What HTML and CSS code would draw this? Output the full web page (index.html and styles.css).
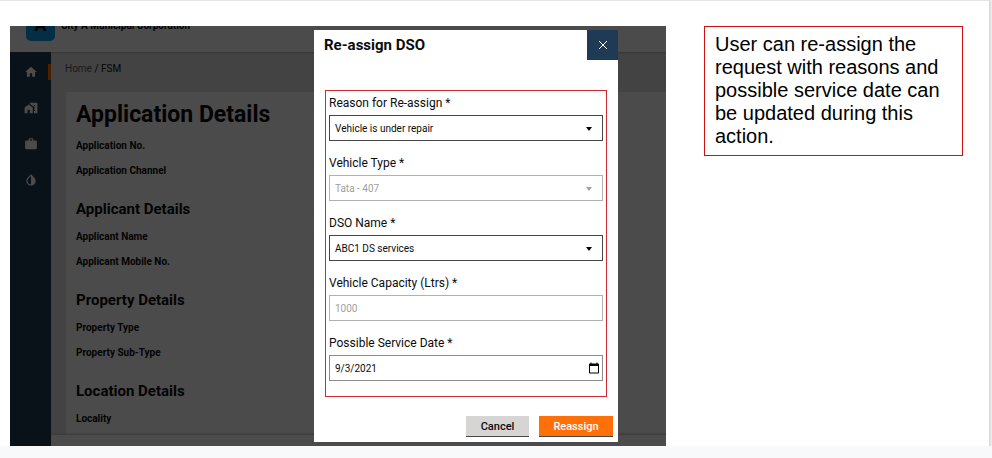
FILE: index.html
```html
<!DOCTYPE html>
<html lang="en">
<head>
<meta charset="utf-8">
<title>Re-assign DSO</title>
<link rel="stylesheet" href="styles.css">
</head>
<body>
<div class="slide">
  <div class="shot">
    <div class="app">
      <header class="topbar">
        <span class="logo">A</span>
        <span class="city">City A Municipal Corporation</span>
      </header>
      <div class="body">
        <nav class="sidebar" aria-label="Main">
          <a class="nav-item active" href="#" aria-label="Home">
            <svg viewBox="0 0 24 24"><path d="M10 20v-6h4v6h5v-8h3L12 3 2 12h3v8z"/></svg>
          </a>
          <a class="nav-item" href="#" aria-label="Property">
            <svg viewBox="0 0 24 24"><path d="M1 11v10h5v-6h4v6h5V11L8 6z"/><path d="M10 3v1.970l7 5V11h2v2h-2v2h2v2h-2v4h6V3H10zm9 6h-2V7h2v2z"/></svg>
          </a>
          <a class="nav-item" href="#" aria-label="Work">
            <svg viewBox="0 0 24 24"><path fill-rule="evenodd" d="M20 6h-4V4c0-1.110-.89-2-2-2h-4c-1.110 0-2 .89-2 2v2H4c-1.110 0-2 .89-2 2v11c0 1.110.89 2 2 2h16c1.110 0 2-.89 2-2V8c0-1.110-.89-2-2-2zM14 6h-4V4h4v2z"/></svg>
          </a>
          <a class="nav-item" href="#" aria-label="Water">
            <svg viewBox="0 0 24 24"><path fill-rule="evenodd" d="M17.660 7.930 12 2.270 6.340 7.930c-3.120 3.120-3.120 8.190 0 11.310C7.900 20.800 9.950 21.580 12 21.580s4.100-.78 5.660-2.340c3.120-3.120 3.120-8.190 0-11.310zM12 19.590c-1.600 0-3.110-.62-4.240-1.760C6.620 16.690 6 15.190 6 13.590s.62-3.110 1.760-4.240L12 5.100v14.490z"/></svg>
          </a>
        </nav>
        <main class="content">
          <p class="crumbs"><a href="#">Home</a> / FSM</p>
          <section class="card">
            <h1>Application Details</h1>
            <p>Application No.</p>
            <p>Application Channel</p>
            <h2>Applicant Details</h2>
            <p>Applicant Name</p>
            <p>Applicant Mobile No.</p>
            <h2>Property Details</h2>
            <p>Property Type</p>
            <p>Property Sub-Type</p>
            <h2>Location Details</h2>
            <p>Locality</p>
          </section>
          <div class="actionbar"></div>
        </main>
      </div>
    </div>
    <div class="overlay">
      <form class="modal" role="dialog" aria-labelledby="title">
        <div class="modal-head">
          <h2 id="title">Re-assign DSO</h2>
          <button type="button" class="close" aria-label="Close">
            <svg viewBox="0 0 10 10"><path d="M1 1l8 8M9 1l-8 8"/></svg>
          </button>
        </div>
        <div class="fields">
          <label for="reason">Reason for Re-assign *</label>
          <div class="control">
            <select id="reason"><option>Vehicle is under repair</option></select>
            <svg class="arrow" viewBox="0 0 6 4"><path d="M0 0h6L3 4z"/></svg>
          </div>
          <label for="type">Vehicle Type *</label>
          <div class="control">
            <select id="type" disabled><option>Tata - 407</option></select>
            <svg class="arrow muted" viewBox="0 0 6 4"><path d="M0 0h6L3 4z"/></svg>
          </div>
          <label for="dso">DSO Name *</label>
          <div class="control">
            <select id="dso"><option>ABC1 DS services</option></select>
            <svg class="arrow" viewBox="0 0 6 4"><path d="M0 0h6L3 4z"/></svg>
          </div>
          <label for="capacity">Vehicle Capacity (Ltrs) *</label>
          <div class="control"><input id="capacity" type="text" value="1000" disabled></div>
          <label for="date">Possible Service Date *</label>
          <div class="control">
            <input id="date" class="date" type="text" value="9/3/2021">
            <svg class="calendar" viewBox="0 0 24 24"><path fill-rule="evenodd" d="M20 3h-1V1h-2v2H7V1H5v2H4c-1.100 0-2 .9-2 2v16c0 1.100.9 2 2 2h16c1.100 0 2-.9 2-2V5c0-1.100-.9-2-2-2zm0 18H4V8h16v13z"/></svg>
          </div>
        </div>
        <div class="buttons">
          <button type="button" class="btn cancel">Cancel</button>
          <button type="submit" class="btn primary">Reassign</button>
        </div>
      </form>
    </div>
  </div>
  <p class="note">User can re-assign the request with reasons and possible service date can be updated during this action.</p>
</div>
</body>
</html>
```
FILE: styles.css
```css
* { box-sizing: border-box; }
body {
  margin: 0;
  background: #f8f9fb;
  font-family: Roboto, "Liberation Sans", sans-serif;
  color: #0b0c0c;
}
h1, h2, p { margin: 0; }
.slide {
  display: grid;
  grid-template-columns: 656fr 259fr;
  column-gap: 38px;
  align-items: start;
  margin-right: 2px;
  padding: 25px 26px 0 10px;
  background: #fff;
  border-top: 1px solid #e4e4e4;
  border-right: 1px solid #d8d8d8;
  box-shadow: 0 1px 3px 1px #d4d4d4;
}
.shot { position: relative; overflow: hidden; }

/* The page behind the dialog is scrolled a little, so its top bar is cut. */
.app { margin-top: -14px; background: #e0e0e0; }
.topbar {
  position: relative;
  display: flex;
  align-items: flex-start;
  gap: 6px;
  height: 40px;
  padding: 0 16px;
  background: #fafafa;
  box-shadow: 0 1px 2px #b8b8b8;
}
.logo {
  width: 29px;
  height: 29px;
  border-radius: 5px;
  background: #0a9be0;
  font-size: 18px;
  font-weight: 700;
  line-height: 26px;
  text-align: center;
}
.city { font-size: 10px; font-weight: 700; line-height: 28px; }
.body { display: flex; }
.sidebar { position: relative; width: 41px; padding-top: 12px; background: #1e3a54; }
.nav-item {
  display: flex;
  align-items: center;
  justify-content: center;
  height: 16px;
  margin-bottom: 20px;
  border: solid transparent;
  border-width: 0 3px;
}
.nav-item svg { width: 14px; height: 14px; fill: #fff; }
.nav-item.active { border-right-color: #ff7108; }
.content { flex: 1; }
.crumbs { height: 40px; padding: 0 14px; font-size: 10px; line-height: 34px; }
.crumbs a { color: #505a5f; text-decoration: none; }
.card {
  margin-left: 15px;
  padding: 9px 10px 4px;
  background: #fafafa;
  border-radius: 2px 0 0;
}
.card h1 { margin-bottom: 4px; font-size: 23px; line-height: 28px; }
.card h2 { margin: 14px 0 3px; font-size: 15px; line-height: 24px; }
.card p { font-size: 10px; font-weight: 700; line-height: 25px; }
.actionbar { height: 11px; background: #fafafa; box-shadow: 0 -1px 2px #c0c0c0; }

.overlay {
  position: absolute;
  inset: 0;
  display: grid;
  grid-template-columns: 304fr 304fr 48fr;
  align-items: start;
  padding-top: 4px;
  background: rgba(0, 0, 0, 0.7);
}
.modal { grid-column: 2; background: #fff; }
.modal-head { display: flex; justify-content: space-between; padding-left: 10px; }
.modal-head h2 { font-size: 15px; line-height: 30px; }
.close {
  display: grid;
  place-items: center;
  width: 31px;
  height: 30px;
  padding: 0;
  border: 0;
  background: #1e3a54;
}
.close svg { width: 10px; height: 10px; fill: none; stroke: #fff; }
.fields {
  margin: 30px 11px 19px;
  padding: 0 3px 15px;
  border: 1px solid #cf2a2e;
}
.fields label { display: block; font-size: 12px; line-height: 24px; }
.control { position: relative; margin-bottom: 10px; }
.control:last-child { margin-bottom: 0; }
select, input {
  display: block;
  width: 100%;
  height: 26px;
  margin: 0;
  padding: 0 5px;
  border: 1px solid #464646;
  border-radius: 0;
  background: #fff;
  appearance: none;
  color: #0b0c0c;
  font: 10px Roboto, sans-serif;
  opacity: 1;
}
select:disabled, input:disabled { border-color: #b1b1b1; color: #a0a0a0; opacity: 1; }
.date { border-color: #8c8c8c; }
.arrow { position: absolute; right: 11px; top: 12px; width: 6px; height: 4px; }
.arrow.muted { fill: #a0a0a0; }
.calendar { position: absolute; right: 3px; top: 7px; width: 12px; height: 12px; }
.buttons { display: flex; justify-content: flex-end; gap: 10px; padding: 0 5px 5px; }
.btn {
  height: 21px;
  padding: 0;
  border: 0;
  border-bottom: 1px solid #464646;
  font: 500 11px Roboto, sans-serif;
}
.cancel { width: 63px; background: #d6d5d4; color: #0b0c0c; }
.primary { width: 74px; background: #ff7108; color: #fff; }

.note {
  padding: 6px 10px 7px;
  border: 1px solid #cc1111;
  font: 20px/23px "Liberation Sans", sans-serif;
  color: #000;
}
```
